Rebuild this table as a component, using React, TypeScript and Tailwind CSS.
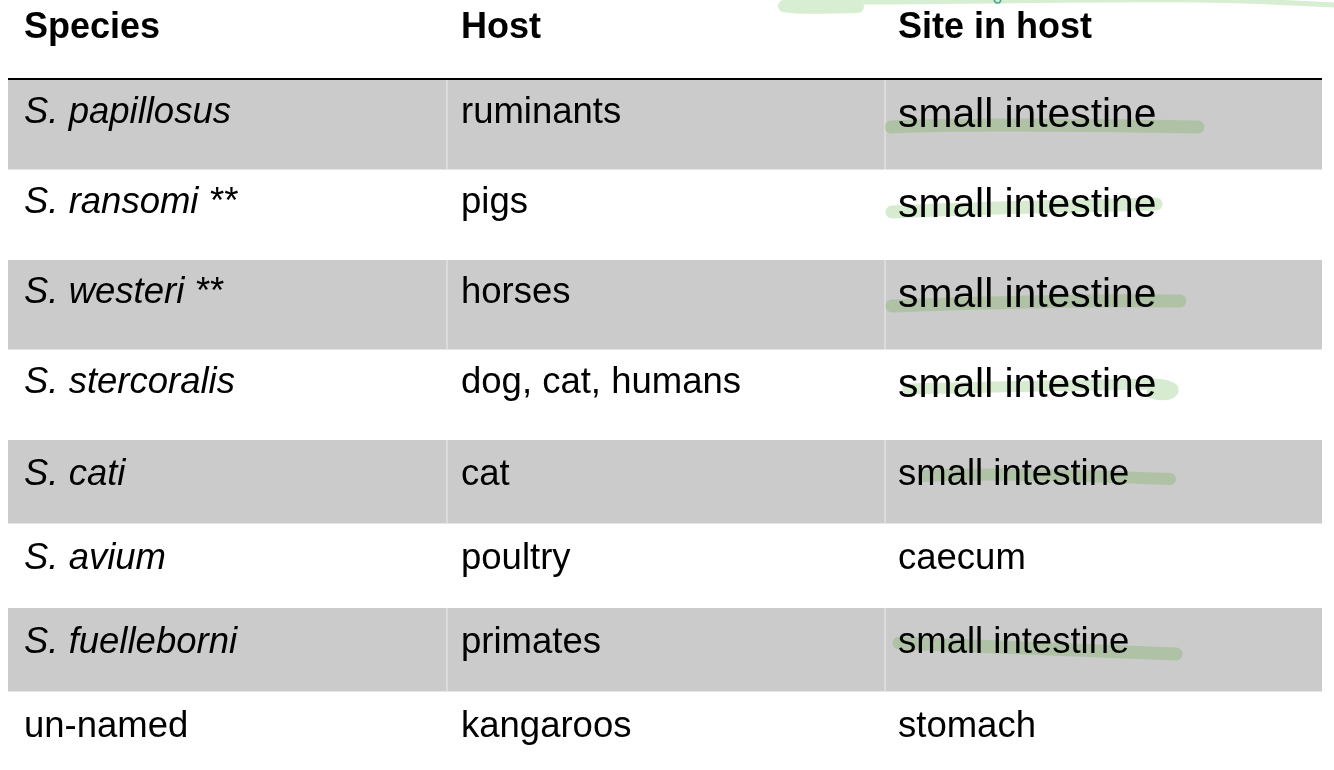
import React from "react";

type Row = { species: string; italic: boolean; host: string; site: string; big: boolean };

const rows: Row[] = [
  { species: "S. papillosus", italic: true, host: "ruminants", site: "small intestine", big: true },
  { species: "S. ransomi **", italic: true, host: "pigs", site: "small intestine", big: true },
  { species: "S. westeri **", italic: true, host: "horses", site: "small intestine", big: true },
  { species: "S. stercoralis", italic: true, host: "dog, cat, humans", site: "small intestine", big: true },
  { species: "S. cati", italic: true, host: "cat", site: "small intestine", big: false },
  { species: "S. avium", italic: true, host: "poultry", site: "caecum", big: false },
  { species: "S. fuelleborni", italic: true, host: "primates", site: "small intestine", big: false },
  { species: "un-named", italic: false, host: "kangaroos", site: "stomach", big: false },
];

function Highlights() {
  return (
    <svg
      className="pointer-events-none absolute left-0 top-0 mix-blend-multiply"
      width="1334"
      height="770"
      viewBox="0 0 1334 770"
    >
      <g fill="none" strokeLinecap="round" strokeLinejoin="round">
        {/* top handwriting remnants */}
        <path d="M784 6 C 800 9, 830 8, 858 7" stroke="#d8eed2" strokeWidth="12" />
        <path d="M790 0 L 858 0" stroke="#d8eed2" strokeWidth="12" />
        <path d="M858 2 C 950 2, 1100 -1, 1200 0 C 1260 1, 1300 3, 1334 5" stroke="#d8eed2" strokeWidth="5" />
        <path d="M994 -2 C 994 4, 1000 5, 1001 -1" stroke="#4aa88f" strokeWidth="1.6" />
        {/* row 1 (gray) */}
        <path d="M891 127 C 950 124, 1080 125, 1198 127" stroke="#dcf4cf" strokeWidth="13" />
        {/* row 2 (white) */}
        <path d="M892 212 C 960 208, 1080 206, 1156 204" stroke="#d6ebcf" strokeWidth="13" />
        {/* row 3 (gray) */}
        <path d="M892 306 C 960 303, 1090 300, 1180 301" stroke="#dcf4cf" strokeWidth="13" />
        {/* row 4 (white) */}
        <path d="M908 389 C 980 387, 1090 385, 1150 384 C 1165 384, 1174 387, 1173 391 C 1171 395, 1160 396, 1152 393" stroke="#d6ebcf" strokeWidth="11" />
        {/* row 5 (gray) */}
        <path d="M924 476 C 990 473, 1100 476, 1170 479" stroke="#dcf4cf" strokeWidth="12" />
        {/* row 7 (gray) */}
        <path d="M899 643 C 960 646, 1080 650, 1176 654" stroke="#dcf4cf" strokeWidth="13" />
      </g>
    </svg>
  );
}

export default function App() {
  return (
    <div
      className="relative h-[770px] w-[1334px] overflow-hidden bg-white text-black"
      style={{ fontFamily: '"Liberation Sans", Arial, sans-serif' }}
    >
      <div className="pl-[8px] pr-[12px]">
        <div className="grid h-[80px] grid-cols-3 border-b-2 border-black text-[36px] font-bold leading-[40px]">
          <div className="pl-[16px] pt-[6px]">Species</div>
          <div className="pl-[15px] pt-[6px]">Host</div>
          <div className="pl-[14px] pt-[6px]">Site in host</div>
        </div>
        {rows.map((r, i) => {
          const gray = i % 2 === 0;
          const h = i < 4 ? "h-[90px]" : "h-[84px]";
          const pt = i < 4 ? "pt-[11px]" : "pt-[13px]";
          const div = gray ? "border-[#dcdcdc]" : "border-transparent";
          return (
            <div
              key={i}
              className={`grid grid-cols-3 text-[36.5px] leading-[40px] ${h} ${
                gray ? "border-b border-[#e4e4e4] bg-[#cbcbcb]" : "bg-white"
              }`}
            >
              <div className={`pl-[16px] ${pt} ${r.italic ? "italic" : ""}`}>{r.species}</div>
              <div className={`border-l-2 pl-[13px] ${pt} ${div}`}>{r.host}</div>
              <div className={`border-l-2 pl-[12px] ${div} ${r.big ? "pt-[13px] text-[40.8px]" : pt}`}>
                {r.site}
              </div>
            </div>
          );
        })}
      </div>
      <Highlights />
    </div>
  );
}
